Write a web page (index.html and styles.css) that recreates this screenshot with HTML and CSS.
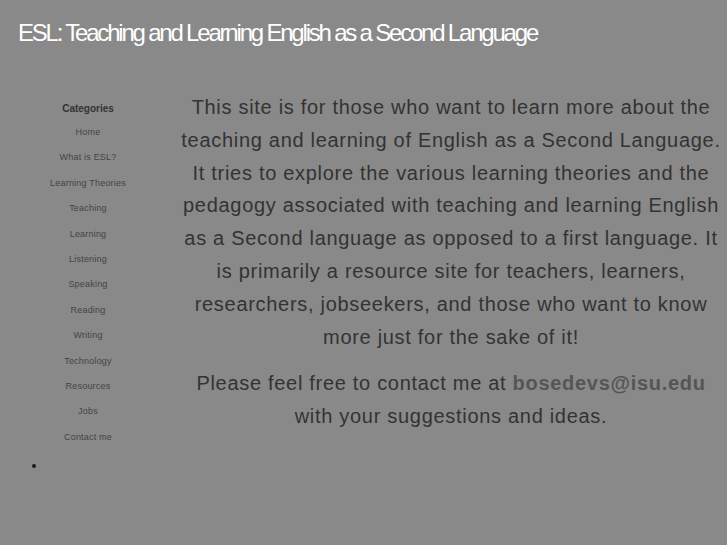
FILE: index.html
```html
<!DOCTYPE html>
<html>
<head>
<meta charset="utf-8">
<title>ESL</title>
<link rel="stylesheet" href="styles.css">
</head>
<body>
<header class="header">
  <h1 class="site-title">ESL: Teaching and Learning English as a Second Language</h1>
</header>
<div class="layout">
  <aside class="sidebar">
    <h2 class="cat-title">Categories</h2>
    <nav class="cat-list">
      <a class="cat-link" href="#">Home</a>
      <a class="cat-link" href="#">What is ESL?</a>
      <a class="cat-link" href="#">Learning Theories</a>
      <a class="cat-link" href="#">Teaching</a>
      <a class="cat-link" href="#">Learning</a>
      <a class="cat-link" href="#">Listening</a>
      <a class="cat-link" href="#">Speaking</a>
      <a class="cat-link" href="#">Reading</a>
      <a class="cat-link" href="#">Writing</a>
      <a class="cat-link" href="#">Technology</a>
      <a class="cat-link" href="#">Resources</a>
      <a class="cat-link" href="#">Jobs</a>
      <a class="cat-link" href="#">Contact me</a>
    </nav>
    <ul class="bullet-list"><li class="bullet-item">&nbsp;</li></ul>
  </aside>
  <main class="content">
    <p class="para">This site is for those who want to learn more about the teaching and learning of English as a Second Language. It tries to explore the various learning theories and the pedagogy associated with teaching and learning English as a Second language as opposed to a first language. It is primarily a resource site for teachers, learners, researchers, jobseekers, and those who want to know more just for the sake of it!</p>
    <p class="para">Please feel free to contact me at <a class="email" href="#">bosedevs@isu.edu</a> with your suggestions and ideas.</p>
  </main>
</div>
</body>
</html>
```
FILE: styles.css
```css
html, body {
  margin: 0;
  padding: 0;
}
body {
  background: #898989;
  font-family: "Liberation Sans", Arial, sans-serif;
  color: #333;
  width: 727px;
  height: 545px;
  overflow: hidden;
}
.header {
  padding: 19px 0 0 18px;
  height: 56px;
  box-sizing: border-box;
}
.site-title {
  margin: 0;
  font-size: 24px;
  font-weight: normal;
  letter-spacing: -2.2px;
  color: #fff;
  line-height: 28px;
}
.layout {
  display: flex;
}
.sidebar {
  width: 176px;
  flex: none;
  text-align: center;
  padding-top: 46px;
}
.cat-title {
  margin: 0;
  font-size: 10px;
  font-weight: bold;
  color: #333;
  line-height: 14px;
}
.cat-list {
  display: flex;
  flex-direction: column;
  margin-top: 4px;
}
.cat-link {
  font-size: 9px;
  line-height: 25.4px;
  color: #444;
  text-decoration: none;
  letter-spacing: 0.2px;
}
.bullet-list {
  margin: 3px 0 0;
  padding-left: 46px;
  text-align: left;
  font-size: 12px;
  color: #1a1a1a;
  line-height: 25px;
}
.content {
  flex: 1;
  padding: 35px 3px 0 2px;
  text-align: center;
}
.para {
  margin: 0 0 14px;
  font-size: 20px;
  line-height: 32.8px;
  letter-spacing: 0.7px;
  color: #333;
}
.email {
  color: #555;
  font-weight: bold;
  text-decoration: none;
}
```
